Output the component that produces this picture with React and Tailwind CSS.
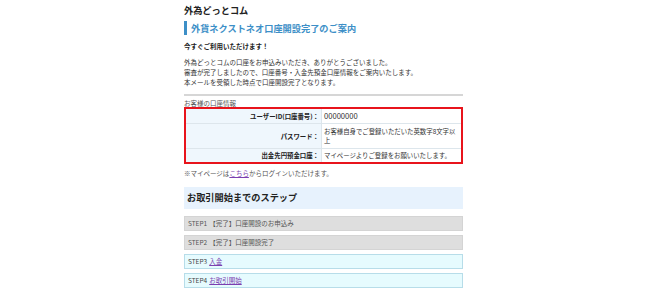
import React from "react";

const rows = [
  { label: "ユーザーID(口座番号)：", value: "00000000", pad: "py-[2px]", big: true },
  { label: "パスワード：", value: "お客様自身でご登録いただいた英数字8文字以上", pad: "py-[3px]" },
  { label: "出金先円預金口座：", value: "マイページよりご登録をお願いいたします。", pad: "py-[2px]" },
];

const steps = [
  { no: "STEP1", text: "【完了】口座開設のお申込み", done: true },
  { no: "STEP2", text: "【完了】口座開設完了", done: true },
  { no: "STEP3", text: "入金", done: false },
  { no: "STEP4", text: "お取引開始", done: false },
];

const App = () => {
  return (
    <div className="min-h-screen bg-white font-['Noto_Sans_CJK_JP','Noto_Sans',sans-serif] text-[#333]">
      <div className="mx-auto w-[279px] pt-[4px]">
        <h1 className="text-[9.2px] font-bold leading-[12px] text-[#222]">外為どっとコム</h1>

        <h2 className="mt-[5px] border-l-[3px] border-[#3d8fc7] pl-[4px] text-[9.2px] font-bold leading-[14px] text-[#3d8fc7]">
          外貨ネクストネオ口座開設完了のご案内
        </h2>

        <p className="mt-[6px] text-[6.5px] font-bold leading-[10px] text-[#222]">今すぐご利用いただけます！</p>

        <p className="mt-[6px] text-[6.5px] leading-[10px]">
          外為どっとコムの口座をお申込みいただき、ありがとうございました。
          <br />
          審査が完了しましたので、口座番号・入金先預金口座情報をご案内いたします。
          <br />
          本メールを受領した時点で口座開設完了となります。
        </p>

        <div className="mt-[7px] h-[2px] bg-[#d6d6d6]" />

        <p className="mt-[3px] text-[6.5px] leading-[8px] text-[#555]">お客様の口座情報</p>

        {/* 口座情報 */}
        <div className="border-2 border-[#e8141c]">
          {rows.map((row, i) => (
            <div
              key={row.label}
              className={`grid grid-cols-[136px_1fr] text-[6.4px] leading-[9px] ${
                i < rows.length - 1 ? "border-b border-[#dde6ec]" : ""
              }`}
            >
              <div className={`flex items-center justify-end border-r border-[#dde6ec] bg-[#eff7fd] px-[2px] ${row.pad} font-bold text-[#222]`}>
                {row.label}
              </div>
              <div
                className={`flex items-center bg-white px-[2px] ${row.pad} text-[#333] ${
                  row.big ? "text-[7.6px] leading-[10px]" : ""
                }`}
              >
                {row.value}
              </div>
            </div>
          ))}
        </div>

        <p className="mt-[4px] text-[6.5px] leading-[10px] text-[#555]">
          ※マイページは<span className="text-[#7b3fb0] underline">こちら</span>からログインいただけます。
        </p>

        <div className="mt-[9px] flex h-[22px] items-center bg-[#e7f2fd] pl-[3px] text-[9.2px] font-bold text-[#222]">
          お取引開始までのステップ
        </div>

        {/* steps */}
        <div className="mt-[7px] flex flex-col gap-[4px]">
          {steps.map((s) => (
            <div
              key={s.no}
              className={`flex h-[15px] items-center border pl-[3px] text-[6.5px] ${
                s.done ? "border-[#d4d4d4] bg-[#dedede] text-[#555]" : "border-[#b7dde9] bg-[#e6fbfe] text-[#444]"
              }`}
            >
              <span>{s.no}</span>
              {s.done ? (
                <span className="ml-[2px]">{s.text}</span>
              ) : (
                <span className="ml-[2px] text-[#7b3fb0] underline">{s.text}</span>
              )}
            </div>
          ))}
        </div>
      </div>
    </div>
  );
};

export default App;
